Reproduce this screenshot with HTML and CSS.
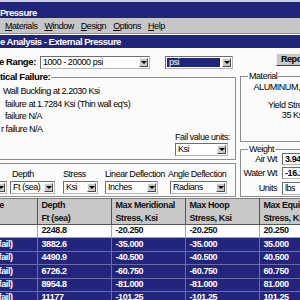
FILE: index.html
```html
<!DOCTYPE html>
<html lang="en">
<head>
  <meta charset="UTF-8" />
  <meta name="viewport" content="width=device-width, initial-scale=1.0"/>
  <title>External Pressure</title>
  <link rel="stylesheet" href="styles.css">
</head>
<body>
<div class="app">
  <div class="titlebar">Pressure</div>
  <div class="menubar">
    <span><u>M</u>aterials</span>
    <span><u>W</u>indow</span>
    <span><u>D</u>esign</span>
    <span><u>O</u>ptions</span>
    <span><u>H</u>elp</span>
  </div>
  <div class="childbar">e Analysis - External Pressure</div>

  <div class="client">
    <div class="range-row">
      <span class="range-label">e Range:</span>
      <div class="combo combo-range"><span class="combo-text">1000 - 20000 psi</span><span class="drop"></span></div>
      <div class="combo combo-unit"><span class="combo-text selected">psi</span><span class="drop"></span></div>
      <div class="btn-report">Report</div>
    </div>

    <div class="mid">
      <div class="left-col">
        <fieldset class="group failure">
          <legend>Critical Failure:</legend>
          <div class="fail-lines">
            <div class="l1">Wall Buckling at 2.2030 Ksi</div>
            <div class="l2">failure at 1.7284 Ksi (Thin wall eq's)</div>
            <div class="l2">failure N/A</div>
            <div class="l4">r failure N/A</div>
          </div>
          <div class="fail-units">
            <span>Fail value units:</span>
            <div class="combo combo-fail"><span class="combo-text">Ksi</span><span class="drop"></span></div>
          </div>
        </fieldset>

        <div class="group units">
          <div class="unit-field f-hidden">
            <span class="unit-label">&nbsp;</span>
            <div class="combo"><span class="combo-text"></span><span class="drop"></span></div>
          </div>
          <div class="unit-field f-depth">
            <span class="unit-label">Depth</span>
            <div class="combo"><span class="combo-text">Ft (sea)</span><span class="drop"></span></div>
          </div>
          <div class="unit-field f-stress">
            <span class="unit-label">Stress</span>
            <div class="combo"><span class="combo-text">Ksi</span><span class="drop"></span></div>
          </div>
          <div class="unit-field f-linear">
            <span class="unit-label">Linear Deflection</span>
            <div class="combo"><span class="combo-text">Inches</span><span class="drop"></span></div>
          </div>
          <div class="unit-field f-angle">
            <span class="unit-label">Angle Deflection</span>
            <div class="combo"><span class="combo-text">Radians</span><span class="drop"></span></div>
          </div>
        </div>
      </div>

      <div class="right-col">
        <fieldset class="group material">
          <legend>Material</legend>
          <div class="mat-body">
            <div>ALUMINUM, 6061-T6</div>
            <div class="mat-yield">Yield Strength</div>
            <div>35 Ksi</div>
          </div>
        </fieldset>
        <fieldset class="group weight">
          <legend>Weight</legend>
          <div class="w-row"><span class="w-label">Air Wt</span><div class="w-input bold">3.943</div></div>
          <div class="w-row"><span class="w-label">Water Wt</span><div class="w-input bold">-16.21</div></div>
          <div class="w-row w-units"><span class="w-label">Units</span><div class="w-input">lbs</div></div>
        </fieldset>
      </div>
    </div>

    <table class="grid">
      <colgroup>
        <col class="c-first"><col class="c-num"><col class="c-num"><col class="c-num"><col class="c-num">
      </colgroup>
      <thead>
        <tr>
          <th class="first">Mode<br>&nbsp;</th>
          <th>Depth<br>Ft (sea)</th>
          <th>Max Meridional<br>Stress, Ksi</th>
          <th>Max Hoop<br>Stress, Ksi</th>
          <th>Max Equivalent<br>Stress, Ksi</th>
        </tr>
      </thead>
      <tbody>
        <tr class="plain"><td class="first"></td><td>2248.8</td><td>-20.250</td><td>-20.250</td><td>20.250</td></tr>
        <tr class="sel"><td class="first">(fail)</td><td>3882.6</td><td>-35.000</td><td>-35.000</td><td>35.000</td></tr>
        <tr class="sel"><td class="first">(fail)</td><td>4490.9</td><td>-40.500</td><td>-40.500</td><td>40.500</td></tr>
        <tr class="sel"><td class="first">(fail)</td><td>6726.2</td><td>-60.750</td><td>-60.750</td><td>60.750</td></tr>
        <tr class="sel"><td class="first">(fail)</td><td>8954.8</td><td>-81.000</td><td>-81.000</td><td>81.000</td></tr>
        <tr class="sel"><td class="first">(fail)</td><td>11177</td><td>-101.25</td><td>-101.25</td><td>101.25</td></tr>
        <tr class="sel"><td class="first">(fail)</td><td>13412</td><td>-121.50</td><td>-121.50</td><td>121.50</td></tr>
      </tbody>
    </table>
  </div>
</div>
</body>
</html>
```

FILE: styles.css
```css
body {
  margin: 0;
  width: 300px;
  height: 300px;
  overflow: hidden;
  background: #fbfbfb;
  font-family: "Liberation Sans", Arial, sans-serif;
  font-size: 9px;
  letter-spacing: -0.45px;
  color: #000;
}
.app {
  border-top: 2px solid #cdd1dc;
}
.titlebar {
  height: 16px;
  box-sizing: border-box;
  padding-top: 6px;
  line-height: 10px;
  background: #20247a;
  color: #fff;
  font-weight: bold;
  font-size: 9.5px;
  letter-spacing: -0.5px;
  white-space: nowrap;
}
.menubar {
  height: 16px;
  box-sizing: border-box;
  display: flex;
  gap: 7px;
  padding: 2.5px 0 0 5px;
  line-height: 10px;
  background: #c6c6c6;
  border-bottom: 1px solid #8f8f8f;
  white-space: nowrap;
}
.childbar {
  height: 13px;
  box-sizing: border-box;
  margin-top: 1px;
  padding-top: 2px;
  line-height: 10px;
  background: #20247a;
  color: #fff;
  font-weight: bold;
  font-size: 9.5px;
  letter-spacing: -0.5px;
  white-space: nowrap;
}
.client {
  padding-top: 8px;
}

/* combo boxes */
.combo {
  height: 13px;
  box-sizing: border-box;
  display: flex;
  align-items: stretch;
  flex-shrink: 0;
  background: #fff;
  border: 1px solid;
  border-color: #6e6e6e #b4b4b4 #b4b4b4 #6e6e6e;
}
.combo-text {
  flex: 1;
  padding-left: 2px;
  line-height: 11px;
  white-space: nowrap;
  overflow: hidden;
}
.combo-text.selected {
  margin: 1px;
  line-height: 9px;
  background: #20247a;
  color: #fff;
}
.drop {
  width: 9px;
  margin: 1px;
  display: flex;
  align-items: center;
  justify-content: center;
  background: #c8c8c8;
  border: 1px solid;
  border-color: #f4f4f4 #4a4a4a #4a4a4a #f4f4f4;
  box-sizing: border-box;
}
.drop::after {
  content: "";
  border-left: 3px solid transparent;
  border-right: 3px solid transparent;
  border-top: 3px solid #000;
}

/* range row */
.range-row {
  height: 13px;
  display: flex;
  align-items: flex-start;
}
.range-row > * {
  flex-shrink: 0;
}
.range-label {
  width: 40px;
  margin-left: -1px;
  padding-top: 1px;
  font-weight: bold;
  font-size: 9.5px;
  letter-spacing: -0.4px;
  line-height: 10px;
  white-space: nowrap;
}
.combo-range {
  width: 110px;
  margin-left: 1px;
}
.combo-unit {
  width: 68px;
  margin-left: 15px;
}
.btn-report {
  width: 50px;
  height: 13px;
  margin: -3px 0 0 43px;
  padding-left: 4px;
  box-sizing: border-box;
  line-height: 11px;
  font-weight: bold;
  font-size: 9px;
  background: #c8c8c8;
  border: 1px solid;
  border-color: #f4f4f4 #404040 #404040 #f4f4f4;
  white-space: nowrap;
  overflow: hidden;
}

/* group boxes */
.mid {
  display: flex;
  align-items: flex-start;
  margin-top: 2px;
}
.group {
  margin: 0;
  padding: 0;
  min-width: 0;
  border: 1px solid #8e8e8e;
}
.group legend {
  padding: 0 1px;
  margin-left: 7px;
  line-height: 10px;
  white-space: nowrap;
}
.left-col {
  width: 256px;
  margin-left: -20px;
  flex-shrink: 0;
}
.failure {
  margin-top: 1px;
  padding: 0 7px 3px 0;
}
.failure legend {
  margin-left: 6px;
  font-weight: bold;
  font-size: 9.5px;
  letter-spacing: -0.4px;
}
.fail-lines {
  padding: 3px 0 0 22px;
  line-height: 12.7px;
  white-space: nowrap;
}
.fail-lines .l2 {
  padding-left: 2px;
}
.fail-lines .l4 {
  margin-left: -2px;
}
.fail-units {
  width: 53px;
  margin: -4px 0 0 auto;
  line-height: 10px;
  white-space: nowrap;
}
.combo-fail {
  margin-top: 1px;
}
.units {
  margin-top: 3px;
  padding: 5px 8px 2px 0;
  display: flex;
}
.unit-field {
  display: flex;
  flex-direction: column;
  flex-shrink: 0;
}
.unit-label {
  line-height: 10px;
  white-space: nowrap;
}
.unit-field .combo {
  margin-top: 2px;
}
.f-hidden { width: 26px; }
.f-depth { width: 45px; margin-left: 3px; }
.f-depth .unit-label { padding-left: 2px; }
.f-stress { width: 35px; margin-left: 8px; }
.f-linear { width: 53px; margin-left: 7px; }
.f-angle { width: 57px; margin-left: 12px; }
.f-angle .unit-label { margin-left: -2px; }

.right-col {
  width: 106px;
  margin-left: 4px;
  flex-shrink: 0;
}
.material {
  padding: 1px 0 21px;
  line-height: 10px;
  white-space: nowrap;
}
.mat-body {
  text-align: center;
}
.mat-yield {
  margin-top: 8px;
}
.weight {
  margin-top: 3px;
  padding: 0 0 1px;
}
.weight legend {
  line-height: 8px;
}
.w-row {
  display: flex;
  gap: 5px;
}
.w-row + .w-row {
  margin-top: 2px;
}
.w-row.w-units {
  margin-top: 3px;
}
.w-label {
  width: 36px;
  flex-shrink: 0;
  text-align: right;
  line-height: 12px;
  white-space: nowrap;
}
.w-input {
  flex: 1;
  height: 12px;
  box-sizing: border-box;
  padding-left: 2px;
  line-height: 10px;
  background: #fff;
  border: 1px solid;
  border-color: #6e6e6e #b4b4b4 #b4b4b4 #6e6e6e;
  white-space: nowrap;
}
.w-units .w-input {
  height: 13px;
  line-height: 11px;
}
.bold {
  font-weight: bold;
  font-size: 9px;
  letter-spacing: -0.4px;
}

/* results grid */
.grid {
  margin-top: 1px;
  border-collapse: collapse;
  table-layout: fixed;
  width: 333px;
  font-weight: bold;
  font-size: 9px;
  letter-spacing: -0.4px;
}
.c-first { width: 37px; }
.c-num { width: 74px; }
.grid th,
.grid td {
  padding: 0 0 0 4px;
  text-align: left;
  white-space: nowrap;
  overflow: hidden;
}
.grid th {
  height: 26px;
  box-sizing: border-box;
  line-height: 12.5px;
  background: #c8c8c8;
  color: #111;
  border-top: 1px solid #7a7a7a;
  border-right: 1px solid #555;
  border-bottom: 1px solid #555;
}
.grid th.first {
  text-indent: -22px;
}
.grid td {
  height: 12.4px;
  line-height: 11.4px;
  border-right: 1px solid;
  border-bottom: 1px solid;
}
.grid td.first {
  padding-left: 0;
  text-indent: -4px;
}
.plain td {
  background: #fff;
  color: #111;
  border-color: #a4a4a4;
}
.sel td {
  background: #23247c;
  color: #fff;
  border-color: #6c6ca8;
}
```
